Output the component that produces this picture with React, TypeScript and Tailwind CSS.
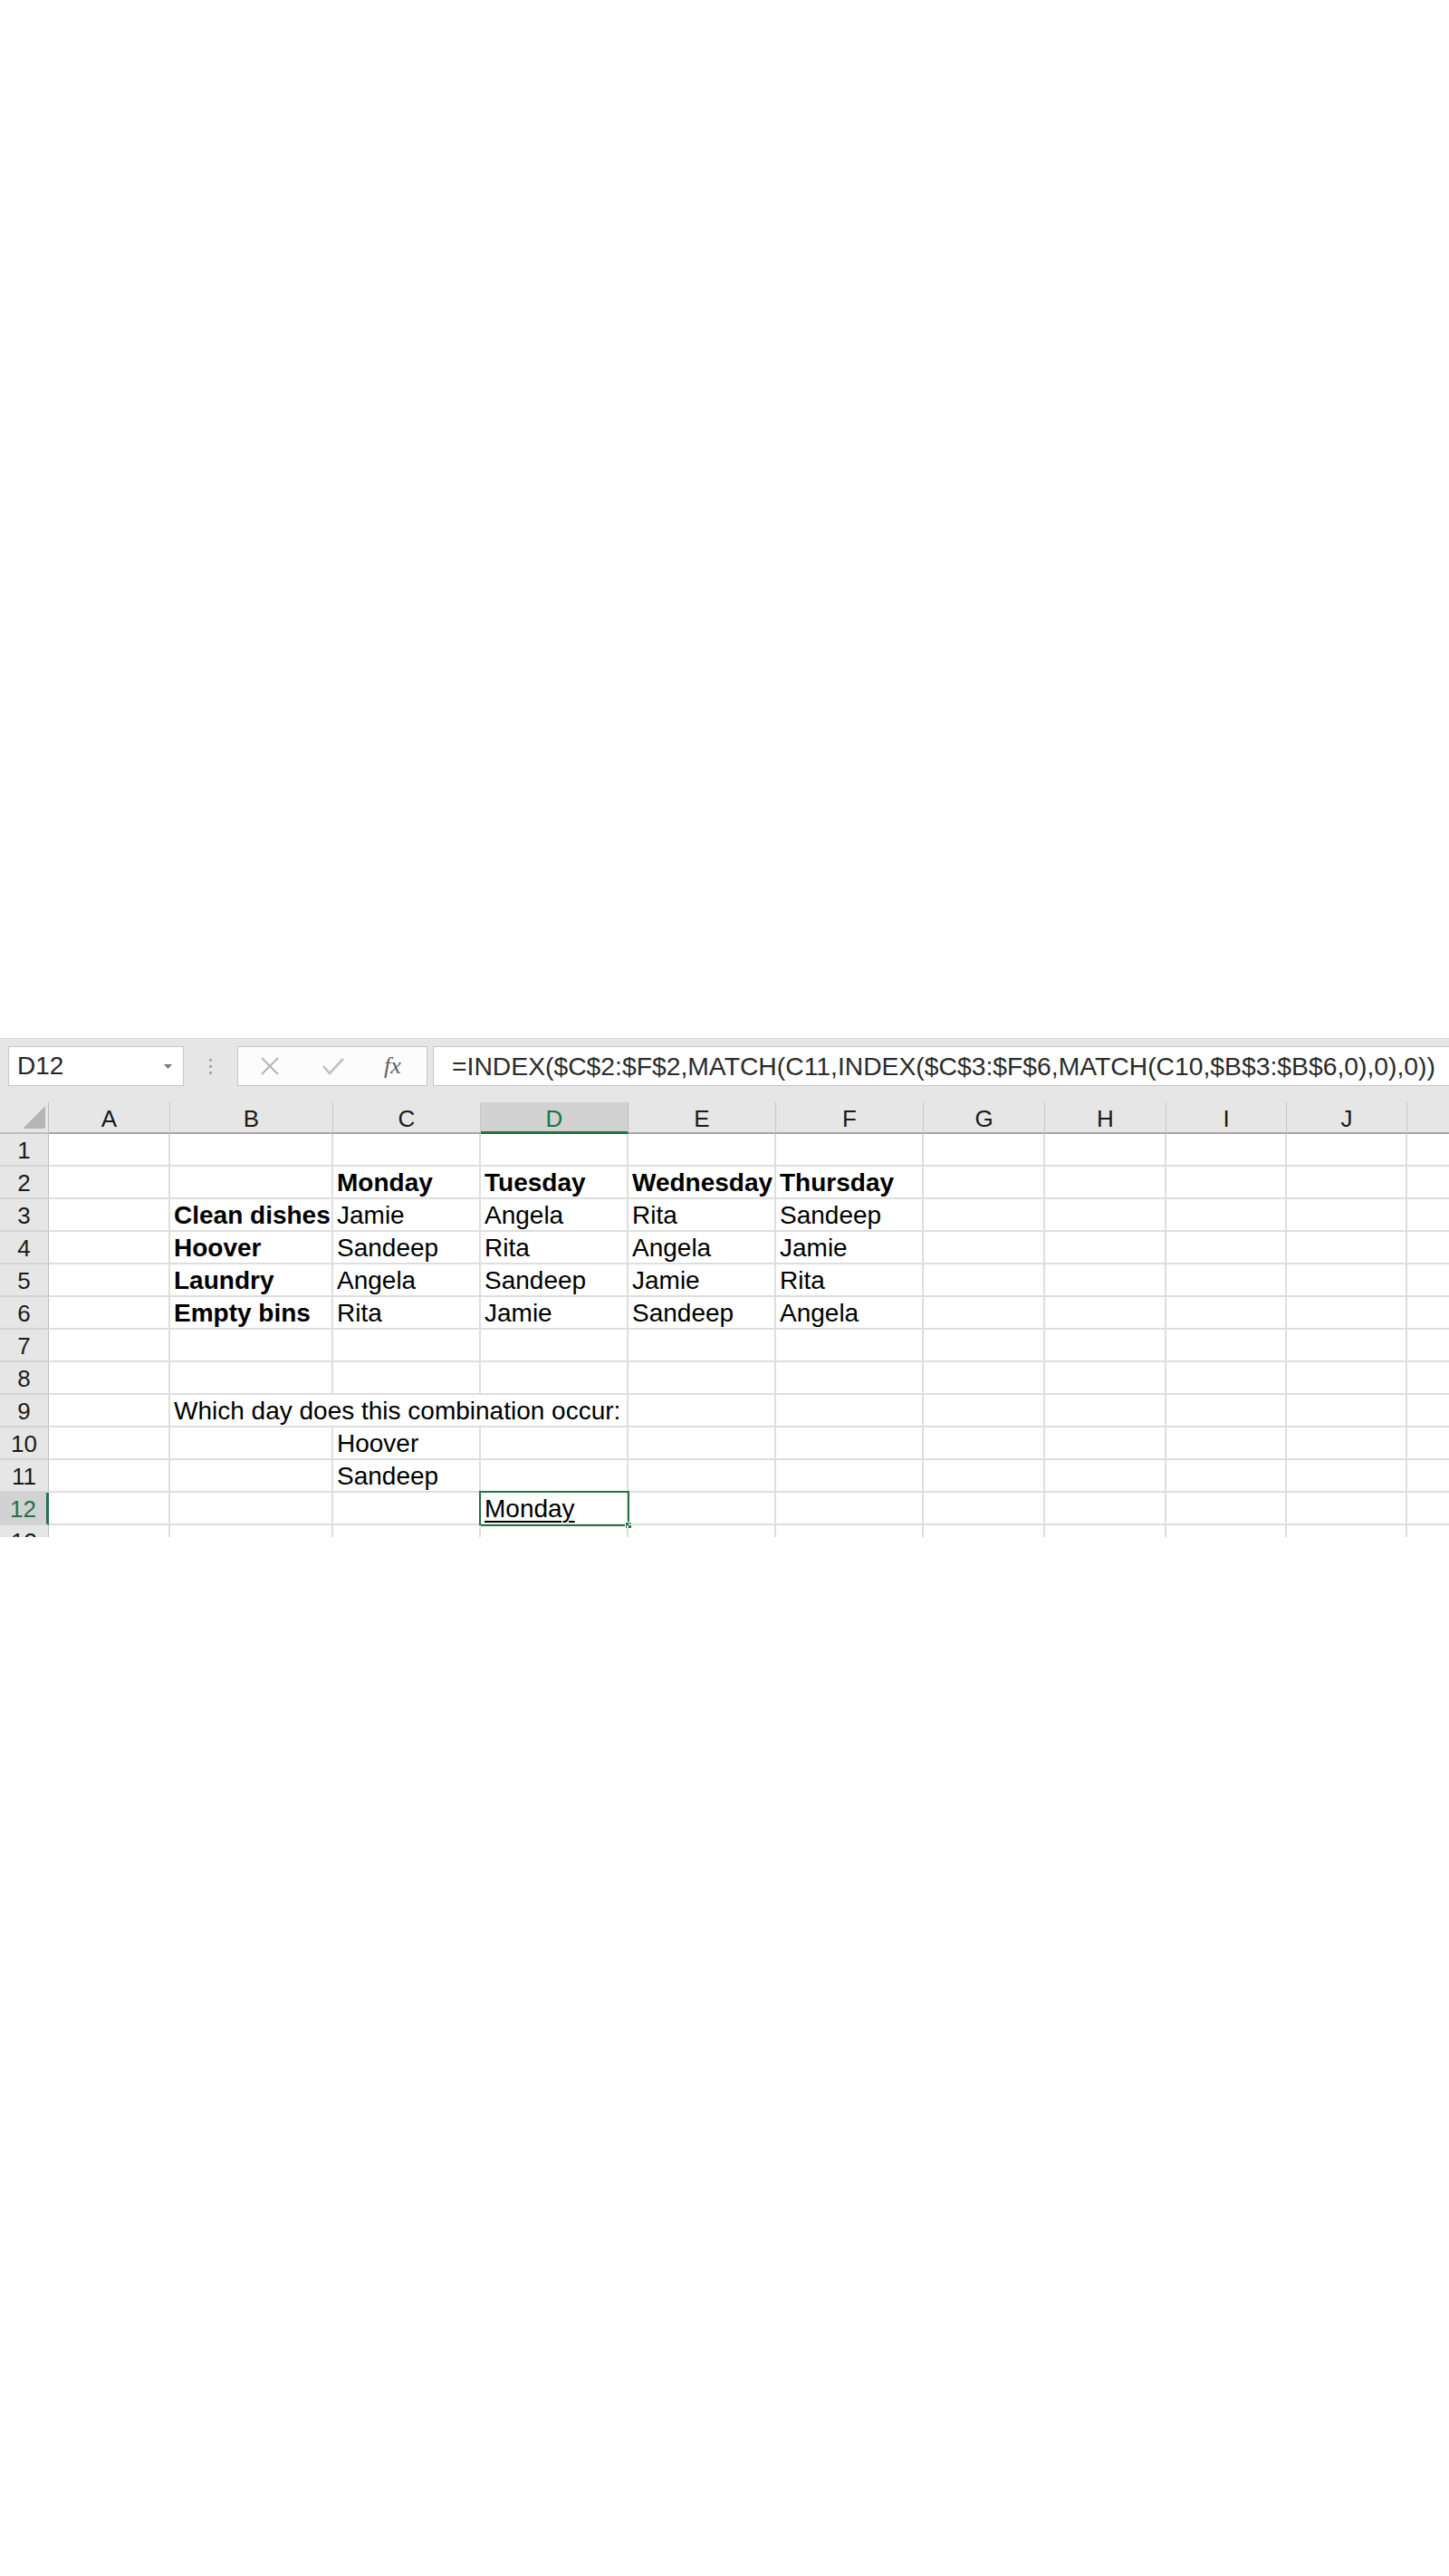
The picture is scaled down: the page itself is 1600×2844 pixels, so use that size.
import React from 'react'

const columns = [
  { key: 'A', w: 'w-[134px]' },
  { key: 'B', w: 'w-[180px]' },
  { key: 'C', w: 'w-[163px]' },
  { key: 'D', w: 'w-[163px]' },
  { key: 'E', w: 'w-[163px]' },
  { key: 'F', w: 'w-[163px]' },
  { key: 'G', w: 'w-[134px]' },
  { key: 'H', w: 'w-[134px]' },
  { key: 'I', w: 'w-[133px]' },
  { key: 'J', w: 'w-[133px]' },
  { key: 'K', w: 'w-[134px]' },
]

const data: Record<number, Record<string, string>> = {
  2: { C: 'Monday', D: 'Tuesday', E: 'Wednesday', F: 'Thursday' },
  3: { B: 'Clean dishes', C: 'Jamie', D: 'Angela', E: 'Rita', F: 'Sandeep' },
  4: { B: 'Hoover', C: 'Sandeep', D: 'Rita', E: 'Angela', F: 'Jamie' },
  5: { B: 'Laundry', C: 'Angela', D: 'Sandeep', E: 'Jamie', F: 'Rita' },
  6: { B: 'Empty bins', C: 'Rita', D: 'Jamie', E: 'Sandeep', F: 'Angela' },
  9: { B: 'Which day does this combination occur:' },
  10: { C: 'Hoover' },
  11: { C: 'Sandeep' },
  12: { D: 'Monday' },
}

const formula = '=INDEX($C$2:$F$2,MATCH(C11,INDEX($C$3:$F$6,MATCH(C10,$B$3:$B$6,0),0),0))'

const isBold = (row: number, col: string) => row === 2 || (col === 'B' && row >= 3 && row <= 6)

const FormulaBar = () => (
  <div className="flex h-[71px] items-start overflow-hidden border-t border-[#d9d9d9] bg-[#e6e6e6] pt-[8px]">
    {/* name box */}
    <div className="ml-[9px] flex h-[44px] w-[194px] shrink-0 items-center justify-between border border-[#c6c6c6] bg-white pl-[9px] pr-[12px]">
      <span className="text-[28px] leading-none text-[#262626]">D12</span>
      <svg width="9" height="5" viewBox="0 0 9 5">
        <polygon points="0,0 9,0 4.5,5" fill="#7a7a7a" />
      </svg>
    </div>
    <div className="flex h-[44px] w-[59px] shrink-0 flex-col items-center justify-center gap-[4px]">
      <span className="h-[3px] w-[3px] bg-[#a9a9a9]" />
      <span className="h-[3px] w-[3px] bg-[#a9a9a9]" />
      <span className="h-[3px] w-[3px] bg-[#a9a9a9]" />
    </div>
    {/* cancel / enter / fx */}
    <div className="relative flex h-[44px] w-[210px] shrink-0 items-center border border-[#c6c6c6] bg-[#fcfcfc]">
      <svg className="ml-[24px]" width="22" height="20" viewBox="0 0 22 20">
        <path d="M2 1 L20 19 M20 1 L2 19" stroke="#b3b3b3" strokeWidth="1.8" fill="none" />
      </svg>
      <svg className="ml-[47px]" width="24" height="20" viewBox="0 0 24 20">
        <path d="M1 10 L8 18 L23 2" stroke="#c2c2c2" strokeWidth="2.6" fill="none" />
      </svg>
      <span className="ml-[44px] font-['Liberation_Serif',serif] text-[26px] italic leading-none text-[#5f5f5f]">
        fx
      </span>
    </div>
    <div className="ml-[6px] flex h-[44px] w-[1200px] shrink-0 items-center border border-[#c6c6c6] bg-white pl-[20px]">
      <span className="whitespace-nowrap text-[28.3px] leading-none text-[#2b2b2b]">{formula}</span>
    </div>
  </div>
)

const ColumnHeader = () => (
  <div className="flex h-[35px]">
    <div className="flex h-[35px] w-[54px] shrink-0 items-end justify-end border-r border-b-2 border-[#bdbdbd] bg-[#e6e6e6] pr-[3px] pb-[4px]">
      <svg width="25" height="25" viewBox="0 0 25 25">
        <polygon points="25,0 25,25 0,25" fill="#b5b5b5" />
      </svg>
    </div>
    {columns.map((c) =>
      c.key === 'D' ? (
        <div
          key={c.key}
          className={`${c.w} flex h-[35px] shrink-0 items-center justify-center border-r border-b-[3px] border-r-[#bdbdbd] border-b-[#217346] bg-[#d2d2d2] pt-[3px] text-[26px] leading-none text-[#217346]`}
        >
          {c.key}
        </div>
      ) : (
        <div
          key={c.key}
          className={`${c.w} flex h-[35px] shrink-0 items-center justify-center border-r border-b-2 border-r-[#c8c8c8] border-b-[#a6a6a6] bg-[#e6e6e6] pt-[2px] text-[26px] leading-none text-[#1a1a1a]`}
        >
          {c.key === 'K' ? '' : c.key}
        </div>
      ),
    )}
  </div>
)

const Row = ({ n, short }: { n: number; short?: boolean }) => {
  const selected = n === 12
  const cells = data[n] ?? {}
  return (
    <div className={`flex ${short ? 'h-[13px] overflow-hidden' : 'h-[36px]'}`}>
      <div
        className={`flex h-[36px] w-[54px] shrink-0 items-end justify-center border-b-2 border-b-[#d4d4d4] pb-[1px] text-[26px] leading-[30px] ${
          selected
            ? 'border-r-[3px] border-r-[#217346] bg-[#d2d2d2] text-[#217346]'
            : 'border-r border-r-[#bdbdbd] bg-[#e6e6e6] text-[#1a1a1a]'
        }`}
      >
        {n}
      </div>
      {columns.map((c) => {
        const text = cells[c.key]
        const overflowRow = n === 9 && (c.key === 'B' || c.key === 'C')
        const current = selected && c.key === 'D'
        return (
          <div
            key={c.key}
            className={`${c.w} relative flex h-[36px] shrink-0 items-end border-b-2 border-[#dedede] pb-[1px] pl-[4px] text-[28px] leading-[30px] text-black ${
              overflowRow ? '' : 'border-r-2'
            }`}
          >
            {text && (
              <span
                className={`whitespace-nowrap ${isBold(n, c.key) ? 'font-bold' : ''} ${
                  current ? 'underline decoration-[2px] underline-offset-[4px]' : ''
                }`}
              >
                {text}
              </span>
            )}
            {current && (
              <div className="absolute -top-[2px] -left-[2px] h-[39px] w-[166px] border-2 border-[#217346]">
                <div className="absolute -right-[5px] -bottom-[5px] h-[8px] w-[8px] border border-white bg-[#217346]" />
              </div>
            )}
          </div>
        )
      })}
    </div>
  )
}

export default function App() {
  return (
    <div className="h-[2844px] w-[1600px] overflow-hidden bg-white font-['Liberation_Sans',Arial,sans-serif]">
      <div className="h-[1146px]" />
      <div className="w-[1600px] overflow-hidden">
        <FormulaBar />
        <ColumnHeader />
        {[1, 2, 3, 4, 5, 6, 7, 8, 9, 10, 11, 12].map((n) => (
          <Row key={n} n={n} />
        ))}
        <Row n={13} short />
      </div>
    </div>
  )
}
